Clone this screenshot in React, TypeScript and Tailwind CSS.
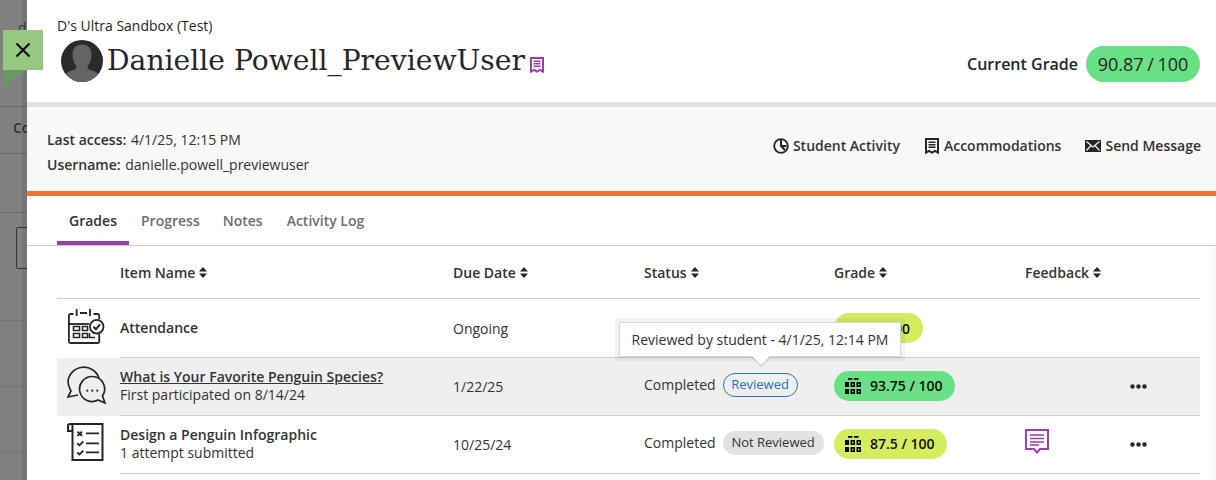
const SANS = "font-['Open_Sans',sans-serif]";

function Sort() {
  return (
    <svg width="8" height="11" viewBox="0 0 8 11" className="ml-[4px] inline-block" fill="#262626">
      <path d="M4 0 L8 4.4 H0 Z M0 6.6 H8 L4 11 Z" />
    </svg>
  );
}

function GradeGlyph() {
  return (
    <svg width="16" height="16" viewBox="0 0 16 16" fill="#000" fillRule="evenodd">
      <path d="M3 0H7.500V1.800H3Z M9 0H13.500V1.800H9Z" />
      <path d="M0 4H4V9H0Z M5.500 4H10V9H5.500Z M7 5.700V7.300H8.500V5.700Z M11.500 4H16V9H11.500Z M13 5.700V7.300H14.500V5.700Z" />
      <path d="M0 11H4V16H0Z M5.500 11H10V16H5.500Z M7 12.700V14.300H8.500V12.700Z M11.500 11H16V16H11.500Z M13 12.700V14.300H14.500V12.700Z" />
    </svg>
  );
}

function Dots() {
  return (
    <svg width="17" height="5" viewBox="0 0 17 5" fill="#262626">
      <circle cx="2.500" cy="2.500" r="2.200" />
      <circle cx="8.500" cy="2.500" r="2.200" />
      <circle cx="14.500" cy="2.500" r="2.200" />
    </svg>
  );
}

function DocRibbon({ color }: { color: string }) {
  return (
    <svg width="14" height="16" viewBox="0 0 14 16" fill="none">
      <path d="M1 1H13V14.600L10 12.900L7 14.600L4 12.900L1 14.600Z" stroke={color} strokeWidth="2" />
      <path d="M3.500 4.300H10.500M3.500 6.800H10.500M3.500 9.300H10.500" stroke={color} strokeWidth="1.400" />
    </svg>
  );
}

function AttendanceIcon() {
  return (
    <svg width="37" height="36" viewBox="0 0 37 36" fill="none" stroke="#262626" strokeWidth="1.800">
      <path d="M5.500 6H2.500C1.500 6 0.900 6.600 0.900 7.500V33.500C0.900 34.400 1.500 35 2.500 35H29.500C30.500 35 31.200 34.400 31.200 33.500V26" />
      <path d="M31.200 11V7.500C31.200 6.600 30.500 6 29.500 6H25.500" />
      <path d="M8.700 1V8M22 1V8M12 5H19" />
      <path d="M0.900 16H21" />
      <path d="M5.500 18.500H11.500V22.500H5.500ZM14.500 18.500H19.500V22.500H14.500ZM5.500 25.500H11.500V29.500H5.500ZM14.500 25.500H19.500V29.500H14.500Z" strokeWidth="1.600" />
      <path d="M21.500 25V29.500H27" strokeWidth="1.600" />
      <circle cx="28.700" cy="18.700" r="6.800" fill="#fff" />
      <path d="M25.500 18.800L27.900 21.300L32 16.300" strokeWidth="2" />
    </svg>
  );
}

function DiscussionIcon() {
  return (
    <svg width="39" height="39" viewBox="0 0 39 39" fill="none" stroke="#262626" strokeWidth="1.700">
      <path d="M32 13A16 16 0 0 0 1 16C1 20 2.500 23.500 4 26L1 32L11 30" />
      <path d="M25 11.500A12.500 12.500 0 1 0 31 35L38 38L35.500 31A12.500 12.500 0 0 0 25 11.500Z" />
      <circle cx="20.300" cy="25.700" r="1.100" fill="#262626" stroke="none" />
      <circle cx="25.300" cy="25.700" r="1.100" fill="#262626" stroke="none" />
      <circle cx="30.300" cy="25.700" r="1.100" fill="#262626" stroke="none" />
    </svg>
  );
}

function ChecklistIcon() {
  return (
    <svg width="37" height="39" viewBox="0 0 37 39" fill="none" stroke="#262626" strokeWidth="2">
      <path d="M5.500 8H1V3C1 1.500 2 1 3 1H35.500V37H5.500V3C5.500 1.600 4.500 1 3 1" />
      <path d="M10.500 8.700L15 12.700M15 8.700L10.500 12.700" strokeWidth="1.900" />
      <path d="M19 10.300H32M19 20.300H32M19 29.300H32" strokeWidth="1.700" />
      <path d="M10.300 20.300L12.500 22.300L16.300 18.500M10.300 29.500L12.500 31.500L16.300 27.700" strokeWidth="1.900" />
    </svg>
  );
}

function Pill({ grade, bg }: { grade: string; bg: string }) {
  return (
    <div className={`flex h-[30px] items-center gap-[9px] rounded-full pl-[11px] pr-[12px] text-[14px] font-semibold text-[#111] ${bg}`}>
      <GradeGlyph />
      <span>{grade}</span>
    </div>
  );
}

function HeaderCell({ label }: { label: string }) {
  return (
    <div className="flex items-center text-[14px] font-semibold text-[#333]">
      {label}
      <Sort />
    </div>
  );
}

const COLS = "grid-cols-[63px_333px_191px_190px_191px_1fr]";

export default function App() {
  return (
    <div className={`relative flex h-[480px] w-[1216px] overflow-hidden bg-white ${SANS}`}>
      {/* dimmed page behind the panel */}
      <div className="relative w-[27px] shrink-0 overflow-hidden bg-[#808080]">
        <div className="mt-[18px] pl-[18px] text-[14px] leading-[20px] text-[#333]">d</div>
        <div className="mt-[68px] h-px bg-[#6c6c6c]" />
        <div className="mt-[11px] w-[60px] pl-[13px] text-[14px] font-semibold leading-[20px] text-[#333]">Co</div>
        <div className="mt-[15px] h-px bg-[#6c6c6c]" />
        <div className="mt-[58px] h-px bg-[#6c6c6c]" />
        <div className="ml-[16px] mt-[14px] h-[42px] w-[20px] rounded-[2px] border border-[#333]" />
        <div className="mt-[51px] h-px bg-[#747474]" />
        <div className="mt-[65px] h-px bg-[#747474]" />
        <div className="mt-[64px] h-px bg-[#747474]" />
        <div className="absolute inset-y-0 right-0 w-[5px] bg-black/[0.08]" />
      </div>

      {/* close button */}
      <button className="absolute left-[3px] top-[30px] z-10 flex h-[40px] w-[40px] items-center justify-center bg-[#96c882]">
        <svg width="16" height="16" viewBox="0 0 16 16" stroke="#111" strokeWidth="2.200" fill="none">
          <path d="M1.500 1.500L14.500 14.500M14.500 1.500L1.500 14.500" />
        </svg>
      </button>
      <div className="absolute left-[3px] top-[70px] z-10 h-0 w-0 border-r-[24px] border-t-[17px] border-r-transparent border-t-[#6c9666]" />

      <div className="flex min-w-0 flex-1 flex-col">
        {/* header */}
        <div className="flex h-[102px] items-start justify-between pl-[30px] pr-[16px]">
          <div className="pt-[16px]">
            <div className="text-[14px] leading-[19px] text-[#262626]">D's Ultra Sandbox (Test)</div>
            <div className="mt-[5px] flex items-center pl-[4px]">
              <svg width="42" height="42" viewBox="0 0 42 42">
                <defs>
                  <clipPath id="avatar">
                    <circle cx="21" cy="21" r="21" />
                  </clipPath>
                </defs>
                <circle cx="21" cy="21" r="21" fill="#2a2a2a" />
                <g clipPath="url(#avatar)" fill="#646464">
                  <path d="M21 4.500C14.500 4.500 11.500 9 11.500 15C11.500 20 13.500 24 15.500 26C15.500 28.500 14.500 29.500 11 30.500C6 32 3 34 2 42H40C39 34 36 32 31 30.500C27.500 29.500 26.500 28.500 26.500 26C28.500 24 30.500 20 30.500 15C30.500 9 27.500 4.500 21 4.500Z" />
                </g>
              </svg>
              <h1 className="ml-[4px] font-['DejaVu_Serif',serif] text-[28.2px] font-normal leading-[40px] text-[#262626]">
                Danielle Powell_PreviewUser
              </h1>
              <span className="ml-[5px] mt-[7px]">
                <DocRibbon color="#9b3eb4" />
              </span>
            </div>
          </div>
          <div className="mt-[46px] flex items-center">
            <span className="text-[16px] font-semibold text-[#262626]">Current Grade</span>
            <span className="ml-[8px] flex h-[36px] w-[114px] items-center justify-center rounded-full bg-[#6ae086] text-[18px] font-medium text-[#262626] [word-spacing:-1px]">
              90.87 / 100
            </span>
          </div>
        </div>

        {/* info band */}
        <div className="flex h-[94px] justify-between border-y-[5px] border-t-[#e2e2e2] border-b-[#f2722b] bg-[#f8f8f8] pl-[20px] pr-[15px]">
          <div className="pt-[20px] text-[14px] leading-[25px] text-[#333]">
            <div>
              <span className="font-semibold">Last access:</span> <span className="ml-[1px]">4/1/25, 12:15 PM</span>
            </div>
            <div>
              <span className="font-semibold">Username:</span> <span className="ml-[1px]">danielle.powell_previewuser</span>
            </div>
          </div>
          <div className="flex pt-[29px] text-[14px] font-semibold leading-[20px] text-[#333]">
            <div className="flex items-center gap-[4px] self-start">
              <svg width="16" height="16" viewBox="0 0 16 16" fill="none" stroke="#262626" strokeWidth="1.800">
                <circle cx="8" cy="8" r="6.800" />
                <path d="M8 2V8L12 12M8 8H13.500" strokeWidth="2" />
              </svg>
              Student Activity
            </div>
            <div className="ml-[25px] flex items-center gap-[5px] self-start">
              <DocRibbon color="#262626" />
              Accommodations
            </div>
            <div className="ml-[24px] flex items-center gap-[4px] self-start">
              <svg width="16" height="12" viewBox="0 0 16 12">
                <rect width="16" height="12" fill="#262626" />
                <path d="M1.500 1.500L8 7L14.500 1.500M1.500 10.500L6 5.500M14.500 10.500L10 5.500" stroke="#f8f8f8" strokeWidth="1.200" fill="none" />
              </svg>
              Send Message
            </div>
          </div>
        </div>

        {/* tabs */}
        <div className="flex h-[50px] shrink-0 border-b border-[#cdcdcd] pl-[30px] text-[14px] font-semibold text-[#6e6e6e]">
          <div className="flex h-[49px] w-[72px] items-center justify-center border-b-[4px] border-[#9b3eb4] pt-[4px] text-[#333]">Grades</div>
          <div className="ml-[12px] flex items-center">Progress</div>
          <div className="ml-[23px] flex items-center">Notes</div>
          <div className="ml-[24px] flex items-center">Activity Log</div>
        </div>

        {/* table */}
        <div className="relative flex-1 pl-[30px] pr-[16px] text-[14px] text-[#333]">
          <div className={`grid h-[53px] items-center border-b border-[#cdcdcd] ${COLS}`}>
            <div />
            <HeaderCell label="Item Name" />
            <HeaderCell label="Due Date" />
            <HeaderCell label="Status" />
            <HeaderCell label="Grade" />
            <HeaderCell label="Feedback" />
          </div>

          {/* row 1 */}
          <div className={`grid h-[59px] items-center ${COLS}`}>
            <div className="h-full pl-[11px] pt-[9px]">
              <AttendanceIcon />
            </div>
            <div className="h-full border-b border-[#cdcdcd] pt-[19px] font-semibold leading-[20px]">Attendance</div>
            <div className="h-full border-b border-[#cdcdcd] pt-[20px] leading-[20px]">Ongoing</div>
            <div className="h-full border-b border-[#cdcdcd]" />
            <div className="h-full border-b border-[#cdcdcd] pt-[14px]">
              <div className="flex h-[30px] w-[89px] items-center justify-end rounded-full bg-[#d4ec5e] pr-[13px] font-semibold text-[#111]">
                00
              </div>
            </div>
            <div className="h-full border-b border-[#cdcdcd]" />
          </div>

          {/* row 2 */}
          <div className={`grid h-[58px] items-center bg-[#efefef] ${COLS}`}>
            <div className="h-full pl-[10px] pt-[7px]">
              <DiscussionIcon />
            </div>
            <div className="h-full border-b border-[#cdcdcd] pt-[9px] leading-[20px]">
              <div className="font-semibold underline">What is Your Favorite Penguin Species?</div>
              <div className="-mt-[2px]">First participated on 8/14/24</div>
            </div>
            <div className="h-full border-b border-[#cdcdcd] pt-[19px] leading-[20px]">1/22/25</div>
            <div className="flex h-full items-center border-b border-[#cdcdcd] pb-[4px]">
              Completed
              <span className="ml-[7px] flex h-[24px] w-[75px] items-center justify-center rounded-full border border-[#2a6fc4] text-[13px] text-[#2a6fc4]">
                Reviewed
              </span>
            </div>
            <div className="flex h-full items-center border-b border-[#cdcdcd] pb-[2px]">
              <Pill grade="93.75 / 100" bg="bg-[#6ae086]" />
            </div>
            <div className="flex h-full items-center justify-end border-b border-[#cdcdcd] pr-[53px]">
              <Dots />
            </div>
          </div>

          {/* row 3 */}
          <div className={`grid h-[58px] items-center ${COLS}`}>
            <div className="h-full pl-[10px] pt-[7px]">
              <ChecklistIcon />
            </div>
            <div className="h-full border-b border-[#cdcdcd] pt-[9px] leading-[20px]">
              <div className="font-semibold">Design a Penguin Infographic</div>
              <div className="-mt-[2px]">1 attempt submitted</div>
            </div>
            <div className="h-full border-b border-[#cdcdcd] pt-[19px] leading-[20px]">10/25/24</div>
            <div className="flex h-full items-center border-b border-[#cdcdcd] pb-[4px]">
              Completed
              <span className="ml-[7px] flex h-[24px] w-[101px] items-center justify-center rounded-full bg-[#e2e2e2] text-[13px]">
                Not Reviewed
              </span>
            </div>
            <div className="flex h-full items-center border-b border-[#cdcdcd] pb-[2px]">
              <Pill grade="87.5 / 100" bg="bg-[#d4ec5e]" />
            </div>
            <div className="relative h-full border-b border-[#cdcdcd]">
              <svg className="absolute left-0 top-[13px]" width="24" height="25" viewBox="0 0 24 25" fill="none">
                <path d="M1 1H23V20H15L12 23.500L9 20H1Z" stroke="#9b3eb4" strokeWidth="2" />
                <path d="M5 6H19M5 9.500H19M5 13H19M5 16H14" stroke="#9b3eb4" strokeWidth="1.600" />
              </svg>
              <div className="absolute right-[53px] top-[26px]">
                <Dots />
              </div>
            </div>
          </div>

          {/* tooltip */}
          <div className="absolute left-[724px] top-[111px] z-10 h-0 w-0 border-x-[10px] border-t-[10px] border-x-transparent border-t-black/10" />
          <div className="absolute left-[592px] top-[76px] z-10 flex h-[35px] w-[282px] items-center justify-center border border-[#d8d8d8] bg-white text-[14px] text-[#333] shadow-[0_0_0_4px_rgba(0,0,0,0.05)]">
            Reviewed by student - 4/1/25, 12:14 PM
          </div>
          <div className="absolute left-[725px] top-[110px] z-10 h-0 w-0 border-x-[9px] border-t-[9px] border-x-transparent border-t-white" />

          {/* right-hand shadow */}
          <div className="absolute inset-y-0 right-0 w-[16px] bg-gradient-to-r from-[#ffffff] via-[#ffffff] via-50% to-[#f7f7f7]" />
        </div>
      </div>
    </div>
  );
}
